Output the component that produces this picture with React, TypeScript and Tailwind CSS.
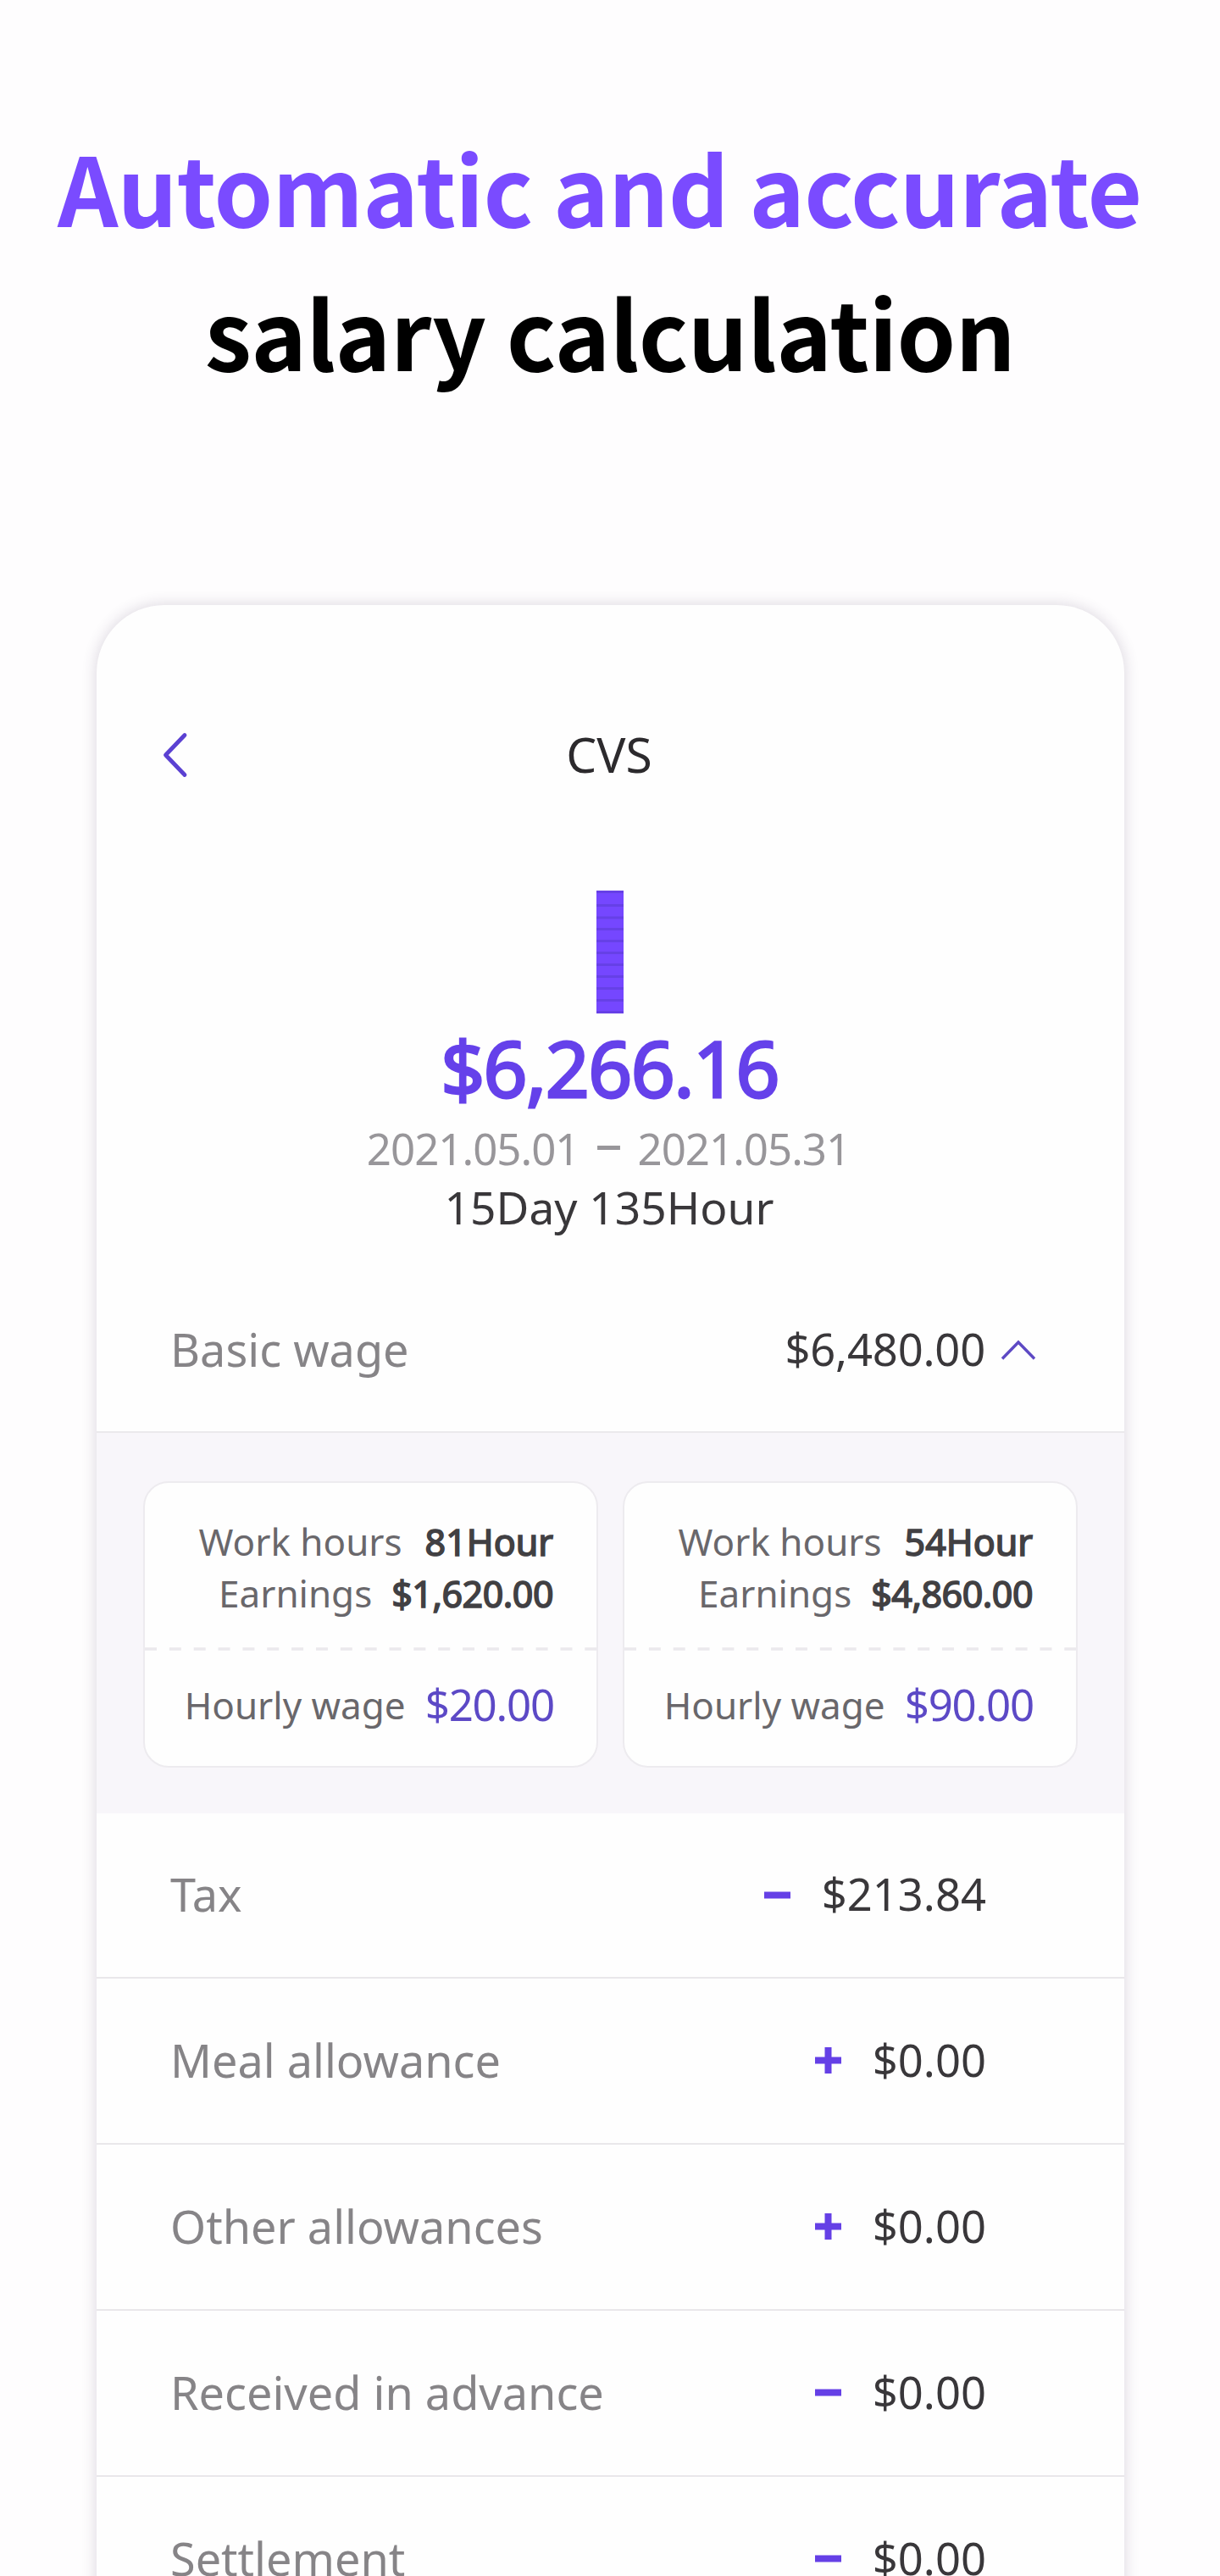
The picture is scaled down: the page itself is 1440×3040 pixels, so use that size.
const wages = [
  { hours: '81Hour', earnings: '$1,620.00', hourly: '$20.00' },
  { hours: '54Hour', earnings: '$4,860.00', hourly: '$90.00' },
];

const rows = [
  { label: 'Tax', sign: '-', value: '$213.84' },
  { label: 'Meal allowance', sign: '+', value: '$0.00' },
  { label: 'Other allowances', sign: '+', value: '$0.00' },
  { label: 'Received in advance', sign: '-', value: '$0.00' },
  { label: 'Settlement', sign: '-', value: '$0.00' },
];

function Sign({ type }: { type: string }) {
  return (
    <svg width="31" height="31" viewBox="0 0 31 31" fill="#6540e6" className="mt-px mr-[37px]">
      <rect x="0" y="11.5" width="31" height="8" />
      {type === '+' && <rect x="11.5" y="0" width="8" height="31" />}
    </svg>
  );
}

function WageCard({ hours, earnings, hourly }: { hours: string; earnings: string; hourly: string }) {
  return (
    <div className="h-[338px] w-[537px] rounded-[30px] border-2 border-[#edebef] bg-[#fefefe] text-[44px] text-[#69676b]">
      <div className="flex h-[194px] flex-col items-end pt-[39px] pr-[51px]">
        <div className="flex h-[61px] items-baseline leading-[61px]">
          Work hours
          <span className="ml-[27px] text-[43px] text-[#414043] [-webkit-text-stroke:1.6px_#414043]">{hours}</span>
        </div>
        <div className="flex h-[61px] items-baseline leading-[61px]">
          Earnings
          <span className="ml-[23px] text-[43px] tracking-[-0.5px] text-[#414043] [-webkit-text-stroke:1.6px_#414043]">{earnings}</span>
        </div>
      </div>
      <svg width="533" height="4" className="block">
        <line x1="0" y1="2" x2="533" y2="2" stroke="#ebe9ed" strokeWidth="3.5" strokeDasharray="14 14.85" />
      </svg>
      <div className="flex h-[132px] items-baseline justify-end pt-[31px] pr-[50px]">
        Hourly wage
        <span className="ml-[23px] translate-y-[2px] text-[51px] leading-[61px] tracking-[-1.2px] text-[#5c49c6]">{hourly}</span>
      </div>
    </div>
  );
}

export default function App() {
  return (
    <div className="h-[3040px] w-[1440px] overflow-hidden bg-[#fefdfe] font-['Noto_Sans',sans-serif]">
      <h1 className="h-[714px] pt-[135px] text-center font-['Noto_Sans_CJK_KR',sans-serif] text-[111.4px] leading-[170px] font-bold tracking-[-0.75px] whitespace-nowrap text-black">
        <span className="block text-[#7a4bff]">Automatic and accurate{'\u00a0'}</span>
        <span className="block">salary calculation</span>
      </h1>

      <div className="ml-[114px] h-[2400px] w-[1213px] rounded-t-[80px] bg-[#fefefe] shadow-[0_0_16px_2px_rgba(70,50,90,0.16)]">
        <div className="grid h-[337px] grid-cols-[1fr_auto_1fr] items-start pr-[81px] pl-[78px] pt-[147px]">
          <svg width="32" height="60" viewBox="0 0 32 60" fill="none" stroke="#5b41d2" strokeWidth="4.8" strokeLinecap="round" strokeLinejoin="round">
            <path d="M26 6.5 L3.5 30 L26 53.5" />
          </svg>
          <span className="-mt-px text-[57px] leading-[60px] text-[#2c2a2d]">CVS</span>
        </div>

        <div className="flex h-[445px] flex-col items-center">
          <svg width="32" height="145" className="mr-px">
            <rect width="32" height="145" fill="#7547ff" />
            {[0, 16, 30.5, 44, 58, 72, 86, 100, 114, 128, 142].map((y) => (
              <rect key={y} y={y} width="32" height="3" fill="#6640e6" />
            ))}
          </svg>
          <div className="mt-[14px] mr-[2px] h-[110px] text-[91px] leading-[100px] tracking-[-1.6px] text-[#6541ea] [-webkit-text-stroke:2.8px_#6541ea]">
            $6,266.16
          </div>
          <div className="mr-[5px] flex h-[70px] text-[51px] leading-[70px] tracking-[-1px] text-[#98969a]">
            2021.05.01
            <span className="mx-[19px] -mt-[7px] text-[64px]">–</span>
            2021.05.31
          </div>
          <div className="mr-[3px] text-[53.3px] leading-[70px] text-[#39373a]">15Day 135Hour</div>
        </div>

        <div className="flex h-[195px] items-center border-b-2 border-[#ebe9ec] pr-[104px] pl-[87px] text-[52.5px]">
          <span className="flex-1 text-[54px] text-[#868487]">Basic wage</span>
          <span className="tracking-[-0.2px] text-[#39373a]">$6,480.00</span>
          <svg width="42" height="26" viewBox="0 0 42 26" fill="none" stroke="#5d49c4" strokeWidth="3.4" className="ml-[18px]">
            <path d="M2 23.5 L21 4 L40 23.5" />
          </svg>
        </div>

        <div className="flex h-[449px] justify-between bg-[#f8f6fa] px-[55px] pt-[57px]">
          {wages.map((wage) => (
            <WageCard key={wage.hours} {...wage} />
          ))}
        </div>

        <div>
          {rows.map((row) => (
            <div
              key={row.label}
              className="flex h-[196.1px] items-center border-b-2 border-[#e9e7ea] pr-[163px] pb-[2px] pl-[87px] text-[52.5px] first:h-[195px]"
            >
              <span className="flex-1 text-[54px] text-[#868487]">{row.label}</span>
              <Sign type={row.sign} />
              <span className="text-[#39373a]">{row.value}</span>
            </div>
          ))}
        </div>
      </div>
    </div>
  );
}
